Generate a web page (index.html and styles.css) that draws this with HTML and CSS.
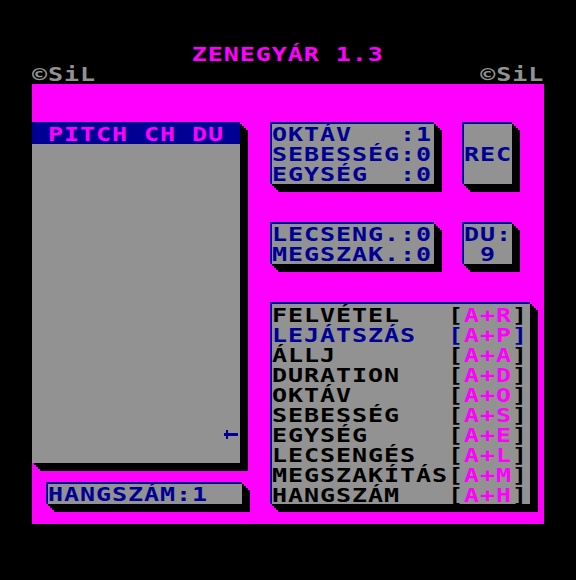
FILE: index.html
```html
<!DOCTYPE html>
<html lang="hu">
<head>
<meta charset="utf-8">
<title>ZENEGYÁR 1.3</title>
<link rel="stylesheet" href="styles.css">
</head>
<body>
<div class="screen">
  <h1 class="title"><span class="ln mid">ZENEGYÁR 1.3</span></h1>
  <div class="credits"><span class="ln">©SiL</span><span class="ln end">©SiL</span></div>
  <main class="panel">
    <section class="left">
      <div class="pitch">
        <div class="pitch-head"><div class="ln">PITCH CH DU</div></div>
        <div class="pitch-body">
          <svg class="arrow" width="14" height="9" viewBox="0 0 14 9" aria-hidden="true">
            <rect x="0" y="3" width="2" height="3" fill="currentColor"/>
            <rect x="2" y="0" width="2" height="9" fill="currentColor"/>
            <rect x="4" y="3" width="10" height="3" fill="currentColor"/>
          </svg>
        </div>
      </div>
      <div class="box hangszam"><div class="ln">HANGSZÁM:1</div></div>
    </section>
    <section class="right">
      <div class="row row3">
        <div class="box info">
          <div class="ln">OKTÁV   :1</div>
          <div class="ln">SEBESSÉG:0</div>
          <div class="ln">EGYSÉG  :0</div>
        </div>
        <div class="box btn"><div class="ln">REC</div></div>
      </div>
      <div class="row row2">
        <div class="box info">
          <div class="ln">LECSENG.:0</div>
          <div class="ln">MEGSZAK.:0</div>
        </div>
        <div class="box btn">
          <div class="ln">DU:</div>
          <div class="ln"> 9</div>
        </div>
      </div>
      <div class="box keys">
        <div class="ln">FELVÉTEL   [<span class="key">A+R</span>]</div>
        <div class="ln sel">LEJÁTSZÁS  [<span class="key">A+P</span>]</div>
        <div class="ln">ÁLLJ       [<span class="key">A+A</span>]</div>
        <div class="ln">DURATION   [<span class="key">A+D</span>]</div>
        <div class="ln">OKTÁV      [<span class="key">A+O</span>]</div>
        <div class="ln">SEBESSÉG   [<span class="key">A+S</span>]</div>
        <div class="ln">EGYSÉG     [<span class="key">A+E</span>]</div>
        <div class="ln">LECSENGÉS  [<span class="key">A+L</span>]</div>
        <div class="ln">MEGSZAKÍTÁS[<span class="key">A+M</span>]</div>
        <div class="ln">HANGSZÁM   [<span class="key">A+H</span>]</div>
      </div>
    </section>
  </main>
</div>
</body>
</html>
```
FILE: styles.css
```css
html, body {
  margin: 0;
  background: #000;
}

body {
  font-family: "DejaVu Sans Mono", "Liberation Mono", monospace;
  font-weight: bold;
  font-size: 20px;
  line-height: 20px;
}

/* Each text line is drawn in a 16px-wide character cell:
   12.8px advance, widened 1.25x for the blocky 8-bit look. */
.ln {
  display: block;
  width: max-content;
  white-space: pre;
  height: 20px;
  letter-spacing: 0.76px;
  transform: scaleX(1.25);
  transform-origin: 0 0;
}

.ln.mid {
  margin: 0 auto;
  transform-origin: 50% 0;
}

.ln.end {
  transform-origin: 100% 0;
}

.screen {
  width: 512px;
  margin: 0 auto;
  padding-top: 44px;
}

.title {
  margin: 0;
  font-size: 20px;
  line-height: 20px;
  font-weight: bold;
  color: #ff00ff;
}

.credits {
  display: flex;
  justify-content: space-between;
  color: #929292;
}

.panel {
  background: #ff00ff;
  height: 440px;
  box-sizing: border-box;
  padding-top: 38px;
  display: flex;
}

.left {
  width: 238px;
  flex: none;
}

.pitch {
  width: 208px;
  box-shadow: 2px 2px 0 #000, 4px 4px 0 #000, 6px 6px 0 #000, 8px 8px 0 #000;
}

.pitch-head {
  height: 22px;
  box-sizing: border-box;
  padding: 2px 0 0 16px;
  background: #000095;
  color: #ff00ff;
}

.pitch-body {
  height: 319px;
  box-sizing: border-box;
  background: #929292;
  color: #000095;
  display: flex;
  justify-content: flex-end;
  align-items: flex-end;
  padding: 0 2px 24px 0;
}

.arrow {
  display: block;
}

.box {
  box-sizing: border-box;
  background: #929292;
  border-top: 2px solid #000095;
  border-left: 2px solid #000095;
  color: #000095;
  box-shadow: 2px 2px 0 #000, 4px 4px 0 #000, 6px 6px 0 #000, 8px 8px 0 #000;
}

.hangszam {
  margin: 19px 0 0 14px;
  width: 196px;
  height: 22px;
}

.right {
  display: flex;
  flex-direction: column;
  gap: 38px;
}

.row {
  display: flex;
  gap: 28px;
}

.info {
  width: 164px;
}

.btn {
  width: 50px;
  display: flex;
  flex-direction: column;
  justify-content: center;
}

.row3 .box {
  height: 62px;
}

.row2 .box {
  height: 42px;
}

.keys {
  width: 260px;
  height: 202px;
  color: #000;
  padding-top: 1px;
}

.keys .sel {
  color: #000095;
}

.keys .key {
  color: #ff00ff;
}
```
